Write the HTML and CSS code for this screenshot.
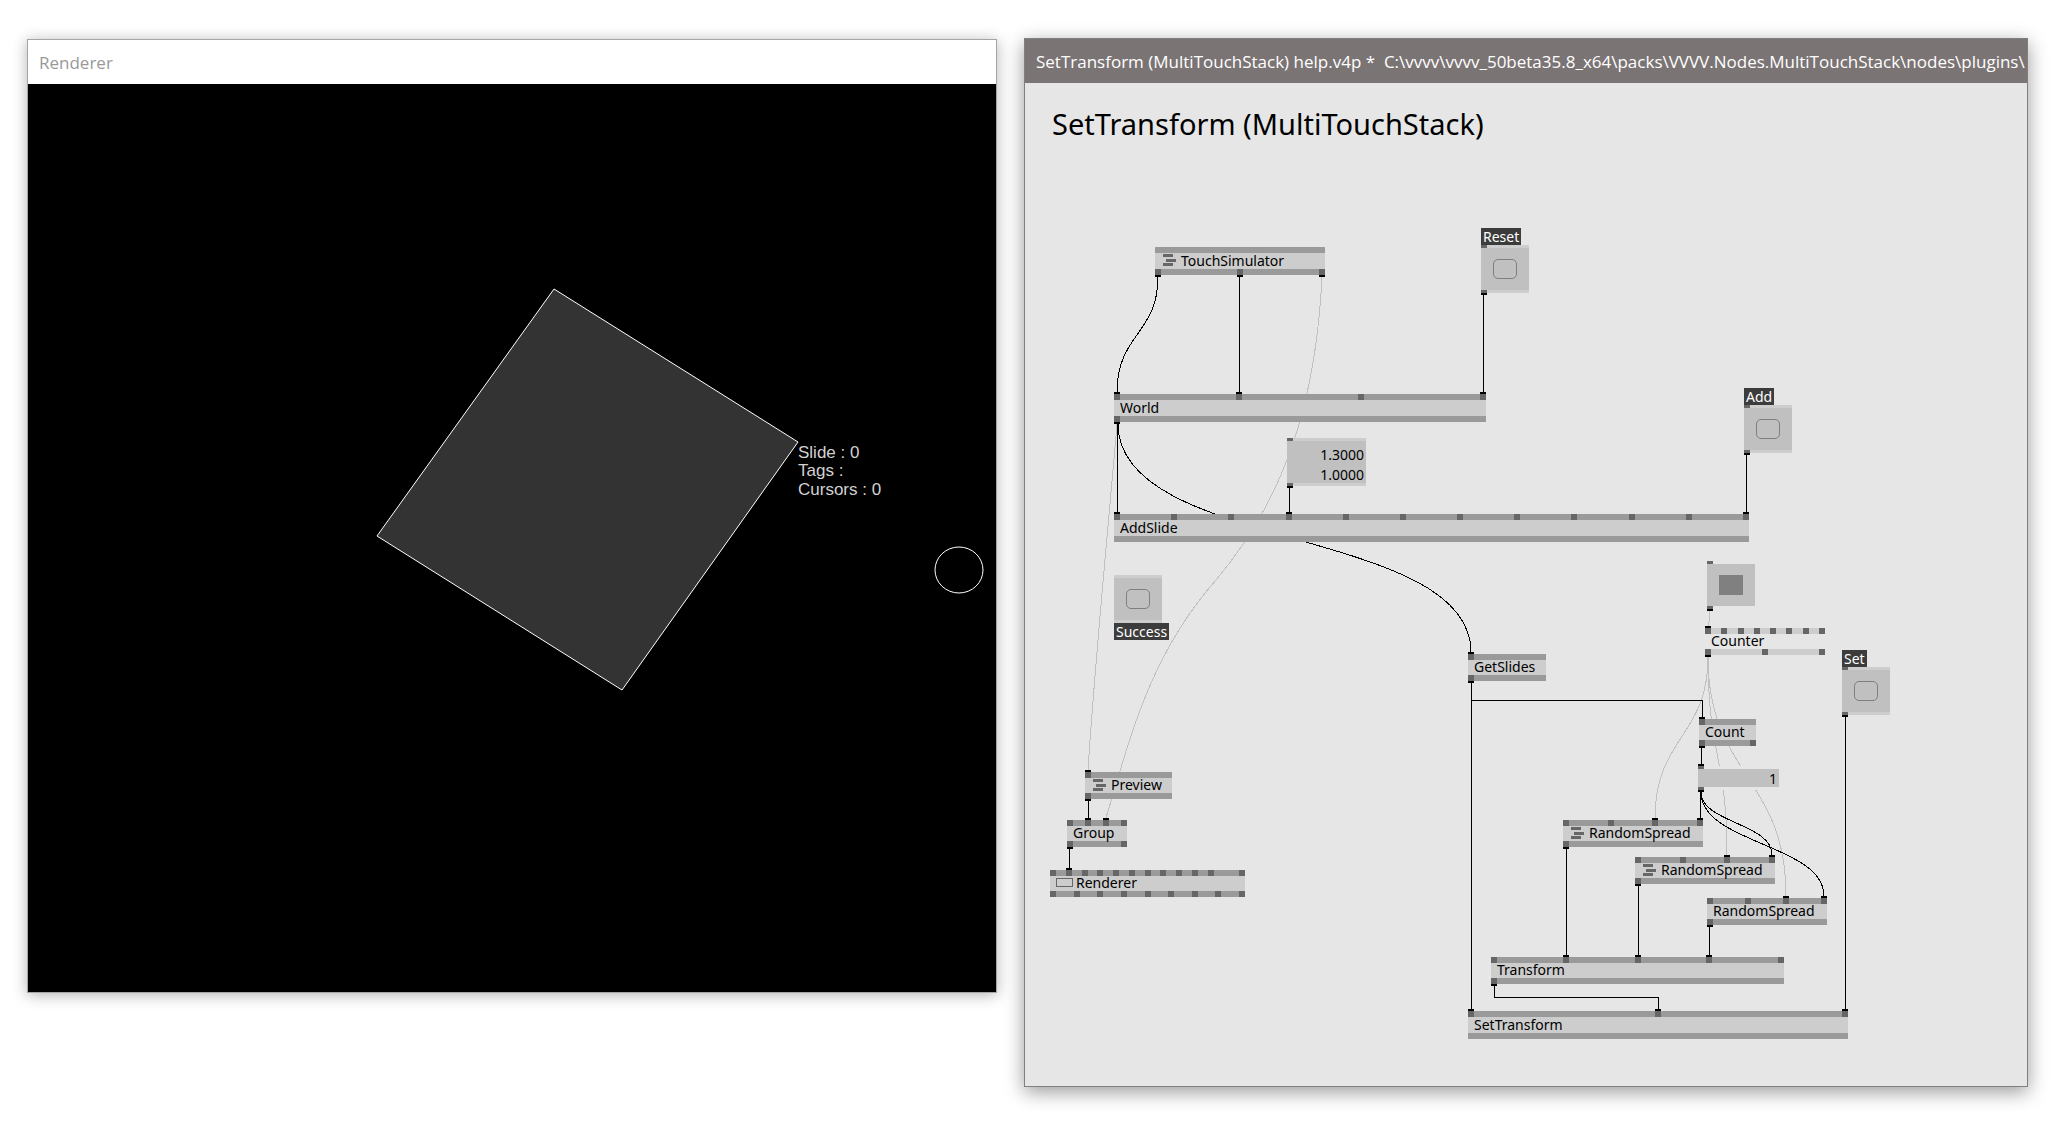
FILE: index.html
```html
<!DOCTYPE html>
<html lang="en">
<head>
<meta charset="utf-8">
<title>SetTransform (MultiTouchStack) help</title>
<link rel="stylesheet" href="styles.css">
</head>
<body>
<main class="desktop">
  <section class="window renderer-window">
    <header class="titlebar">Renderer</header>
    <svg class="scene" viewBox="28 84 968 908" role="img" aria-label="Renderer output">
      <polygon class="slide" points="554,289 798,442 622,690 377,536"/>
      <ellipse class="cursor" cx="959" cy="570" rx="24" ry="23"/>
      <text class="scene-text" x="798" y="458">Slide : 0</text>
      <text class="scene-text" x="798" y="476">Tags :</text>
      <text class="scene-text" x="798" y="495">Cursors : 0</text>
    </svg>
  </section>

  <section class="window patch-window">
    <header class="titlebar">SetTransform (MultiTouchStack) help.v4p *&nbsp; C:\vvvv\vvvv_50beta35.8_x64\packs\VVVV.Nodes.MultiTouchStack\nodes\plugins\</header>
    <div class="patch">
      <h1 class="heading">SetTransform (MultiTouchStack)</h1>

      <svg class="wires" width="1003" height="1003" viewBox="1025 83 1003 1003" aria-hidden="true">
        <g class="wire-soft">
          <path d="M1322 277C1316 400 1286 497 1216 580C1150 655 1131 735 1106 818"/>
          <path d="M1117 424C1109 520 1095 660 1088 770"/>
          <path d="M1709.5 611V618L1708.5 626"/>
          <path d="M1708 657C1708 737 1655 737 1655 818"/>
          <path d="M1708 657C1708 756 1727 756 1727 855"/>
          <path d="M1708 657C1708 776 1786 776 1786 896"/>
        </g>
        <g class="wire">
          <path d="M1158 277C1158 334 1117 334 1117 392"/>
          <path d="M1239.5 277V392"/>
          <path d="M1483.5 295V392"/>
          <path d="M1117.5 424V512"/>
          <path d="M1118 424C1118 552 1471 526 1471 652"/>
          <path d="M1289.5 488V512"/>
          <path d="M1746.5 455V512"/>
          <path d="M1088.5 801V818"/>
          <path d="M1069.5 849V868"/>
          <path d="M1471.5 683V1009"/>
          <path d="M1471.5 700.5H1702.5V717"/>
          <path d="M1701.5 748V764"/>
          <path d="M1700.5 792V818"/>
          <path d="M1701 792C1701 823 1772 823 1772 855"/>
          <path d="M1701 792C1701 844 1824 844 1824 896"/>
          <path d="M1566.5 849V955"/>
          <path d="M1638.5 886V955"/>
          <path d="M1709.5 927V955"/>
          <path d="M1845.5 717V1009"/>
          <path d="M1494.5 986V997.5H1658.5V1009"/>
        </g>
      </svg>

      <div class="node tall touch-simulator">
        <div class="pins"></div>
        <div class="name"><svg class="glyph" viewBox="0 0 13 12"><path d="M0 0h10v3H0zM3 5h10v3H3zM0 9h10v3H0z"/></svg>TouchSimulator</div>
        <div class="pins out"><i class="linked"></i><i class="linked"></i><i class="linked"></i></div>
      </div>

      <div class="node tall world">
        <div class="pins"><i class="linked"></i><i class="linked"></i><i></i><i class="linked"></i></div>
        <div class="name">World</div>
        <div class="pins out"><i class="linked"></i></div>
      </div>

      <div class="node tall add-slide">
        <div class="pins"><i class="linked"></i><i></i><i></i><i class="linked"></i><i></i><i></i><i></i><i></i><i></i><i></i><i></i><i class="linked"></i></div>
        <div class="name">AddSlide</div>
        <div class="pins out"></div>
      </div>

      <div class="node get-slides">
        <div class="pins"><i class="linked"></i></div>
        <div class="name">GetSlides</div>
        <div class="pins out"><i class="linked"></i></div>
      </div>

      <div class="node plain counter">
        <div class="pins"><i class="linked"></i><i></i><i></i><i></i><i></i><i></i><i></i><i></i></div>
        <div class="name">Counter</div>
        <div class="pins out"><i class="linked"></i><i></i><i></i></div>
      </div>

      <div class="node count">
        <div class="pins"><i class="linked"></i></div>
        <div class="name">Count</div>
        <div class="pins out"><i class="linked"></i><i></i></div>
      </div>

      <div class="node random-a">
        <div class="pins"><i></i><i></i><i class="linked"></i><i class="linked"></i></div>
        <div class="name"><svg class="glyph" viewBox="0 0 13 12"><path d="M0 0h10v3H0zM3 5h10v3H3zM0 9h10v3H0z"/></svg>RandomSpread</div>
        <div class="pins out"><i class="linked"></i></div>
      </div>

      <div class="node random-b">
        <div class="pins"><i></i><i></i><i class="linked"></i><i class="linked"></i></div>
        <div class="name"><svg class="glyph" viewBox="0 0 13 12"><path d="M0 0h10v3H0zM3 5h10v3H3zM0 9h10v3H0z"/></svg>RandomSpread</div>
        <div class="pins out"><i class="linked"></i></div>
      </div>

      <div class="node random-c">
        <div class="pins"><i></i><i></i><i class="linked"></i><i class="linked"></i></div>
        <div class="name">RandomSpread</div>
        <div class="pins out"><i class="linked"></i></div>
      </div>

      <div class="node transform">
        <div class="pins"><i></i><i class="linked"></i><i class="linked"></i><i class="linked"></i><i></i></div>
        <div class="name">Transform</div>
        <div class="pins out"><i class="linked"></i></div>
      </div>

      <div class="node tall set-transform">
        <div class="pins"><i class="linked"></i><i class="linked"></i><i class="linked"></i></div>
        <div class="name">SetTransform</div>
        <div class="pins out"></div>
      </div>

      <div class="node preview">
        <div class="pins"><i class="linked"></i></div>
        <div class="name"><svg class="glyph" viewBox="0 0 13 12"><path d="M0 0h10v3H0zM3 5h10v3H3zM0 9h10v3H0z"/></svg>Preview</div>
        <div class="pins out"><i class="linked"></i></div>
      </div>

      <div class="node group">
        <div class="pins"><i></i><i class="linked"></i><i class="linked"></i><i></i></div>
        <div class="name">Group</div>
        <div class="pins out"><i class="linked"></i><i></i></div>
      </div>

      <div class="node renderer">
        <div class="pins"><i></i><i class="linked"></i><i></i><i></i><i></i><i></i><i></i><i></i><i></i><i></i><i></i><i class="hidden"></i><i></i></div>
        <div class="name"><span class="screen"></span>Renderer</div>
        <div class="pins out"><i></i><i></i><i></i><i></i><i></i><i></i><i></i><i></i><i></i></div>
      </div>

      <div class="io reset">
        <label class="tag" for="reset">Reset</label>
        <div class="box">
          <div class="pins"><i></i></div>
          <button class="bang" id="reset" type="button"><span class="ring"></span></button>
          <div class="pins out"><i class="linked"></i></div>
        </div>
      </div>

      <div class="io add">
        <label class="tag" for="add">Add</label>
        <div class="box">
          <div class="pins"><i></i></div>
          <button class="bang" id="add" type="button"><span class="ring"></span></button>
          <div class="pins out"><i class="linked"></i></div>
        </div>
      </div>

      <div class="io set">
        <label class="tag" for="set">Set</label>
        <div class="box">
          <div class="pins"><i></i></div>
          <button class="bang" id="set" type="button"><span class="ring"></span></button>
          <div class="pins out"><i class="linked"></i></div>
        </div>
      </div>

      <div class="io success">
        <div class="box">
          <div class="pins"></div>
          <button class="bang" id="success" type="button"><span class="ring"></span></button>
          <div class="pins out"></div>
        </div>
        <label class="tag" for="success">Success</label>
      </div>

      <div class="io bare toggle-io">
        <div class="box">
          <div class="pins"><i></i></div>
          <label class="bang"><input class="toggle" type="checkbox" checked aria-label="Toggle"></label>
          <div class="pins out"><i class="linked"></i></div>
        </div>
      </div>

      <div class="io size-io">
        <div class="box">
          <div class="pins"><i></i></div>
          <div class="values">
            <input class="value" value="1.3000" aria-label="Size X">
            <input class="value" value="1.0000" aria-label="Size Y">
          </div>
          <div class="pins out"><i class="linked"></i></div>
        </div>
      </div>

      <div class="io bare count-io">
        <div class="box">
          <div class="pins"><i class="linked"></i></div>
          <input class="value" value="1" aria-label="Slide count">
          <div class="pins out"><i class="linked"></i></div>
        </div>
      </div>
    </div>
  </section>
</main>
</body>
</html>
```
FILE: styles.css
```css
* {
  box-sizing: border-box;
}

body {
  margin: 0;
  background: #fff;
  font-family: "Noto Sans", "Open Sans", sans-serif;
}

/* Desktop with two windows */
.desktop {
  display: grid;
  grid-template-columns: 970fr 1004fr;
  align-items: start;
  gap: 27px;
  padding: 38px 43px 48px 27px;
}

.window {
  min-width: 0;
  border: 1px solid #7f7f7f;
  box-shadow: 0 5px 18px rgba(0, 0, 0, 0.4);
}

.titlebar {
  height: 44px;
  padding: 0 11px;
  line-height: 45px;
  font-family: "Open Sans", "Noto Sans", sans-serif;
  font-size: 17px;
  white-space: nowrap;
  overflow: hidden;
}

.renderer-window {
  margin-top: 1px;
  border-color: #a5a5a5;
  box-shadow: 0 2px 14px rgba(0, 0, 0, 0.3);
}

.renderer-window .titlebar {
  background: #fff;
  color: #999;
}

.patch-window .titlebar {
  background: #7b7474;
  color: #fff;
  padding-right: 0;
}

/* Renderer output */
.scene {
  display: block;
  width: 100%;
  background: #000;
}

.slide {
  fill: #333;
  stroke: #fff;
}

.cursor {
  fill: none;
  stroke: #fff;
}

.scene-text {
  fill: #d2d2d2;
  font-family: "Liberation Sans", Arial, sans-serif;
  font-size: 17px;
}

/* Patch canvas */
.patch {
  position: relative;
  min-height: 1003px;
  padding: 20px 27px;
  background: #e6e6e6;
  overflow: hidden;
}

.heading {
  margin: 0;
  font-size: 29px;
  font-weight: 400;
  line-height: 42px;
}

.wires {
  position: absolute;
  left: 0;
  top: 0;
  fill: none;
  shape-rendering: crispEdges;
}

.wire {
  stroke: #000;
}

.wire-soft {
  stroke: #c0c0c0;
}

/* Nodes */
.node,
.io {
  position: absolute;
}

.pins {
  display: flex;
  justify-content: space-between;
  height: 6px;
  background: #9a9a9a;
}

.pins i {
  position: relative;
  width: 6px;
  background: #666;
}

.pins .hidden {
  visibility: hidden;
}

.pins .linked::after {
  content: "";
  position: absolute;
  left: 0;
  bottom: 100%;
  width: 6px;
  height: 2px;
  background: #000;
}

.pins.out .linked::after {
  top: 100%;
  bottom: auto;
}

.name {
  display: flex;
  align-items: center;
  height: 15px;
  padding: 0 0 2px 6px;
  background: #cdcdcd;
  font-size: 14px;
  line-height: 13px;
  white-space: nowrap;
}

.tall .name {
  height: 16px;
}

.plain .name {
  background: #e6e6e6;
}

.plain .pins {
  background: #cdcdcd;
}

.glyph {
  width: 13px;
  height: 12px;
  margin: 0 5px 0 2px;
  fill: #666;
}

.screen {
  width: 17px;
  height: 9px;
  margin-right: 3px;
  border: 1px solid #666;
}

.touch-simulator { left: 130px; top: 164px; width: 170px; }
.world { left: 89px; top: 311px; width: 372px; }
.add-slide { left: 89px; top: 431px; width: 635px; }
.get-slides { left: 443px; top: 571px; width: 78px; }
.counter { left: 680px; top: 545px; width: 120px; }
.count { left: 674px; top: 636px; width: 57px; }
.random-a { left: 538px; top: 737px; width: 140px; }
.random-b { left: 610px; top: 774px; width: 140px; }
.random-c { left: 682px; top: 815px; width: 120px; }
.transform { left: 466px; top: 874px; width: 293px; }
.set-transform { left: 443px; top: 928px; width: 380px; }
.preview { left: 60px; top: 689px; width: 87px; }
.group { left: 42px; top: 737px; width: 60px; }
.renderer { left: 25px; top: 787px; width: 195px; }

/* IO boxes */
.io {
  display: flex;
  flex-direction: column;
  align-items: flex-start;
}

.box {
  width: 48px;
  background: #c0c0c0;
}

.box .pins {
  height: 3px;
  background: #cdcdcd;
}

.bare .pins {
  background: #e6e6e6;
}

.bang {
  display: flex;
  align-items: center;
  justify-content: center;
  width: 100%;
  height: 42px;
  padding: 0;
  border: 0;
  background: #c0c0c0;
}

.ring {
  width: 24px;
  height: 20px;
  border: 1px solid #7f7f7f;
  border-radius: 5px;
}

.toggle {
  appearance: none;
  width: 24px;
  height: 20px;
  margin: 0;
}

.toggle:checked {
  background: #808080;
}

.tag {
  height: 17px;
  padding: 0 2px;
  background: #3c3c3c;
  color: #fff;
  font-size: 14px;
  line-height: 17px;
}

.values {
  height: 42px;
  padding-top: 3px;
}

.value {
  display: block;
  width: 100%;
  height: 20px;
  padding: 0 2px;
  border: 0;
  background: transparent;
  color: #000;
  font-family: inherit;
  font-size: 14px;
  text-align: right;
}

.count-io .value {
  height: 18px;
}

.reset { left: 456px; top: 145px; }
.add { left: 719px; top: 305px; }
.set { left: 817px; top: 567px; }
.success { left: 89px; top: 492px; }
.toggle-io { left: 682px; top: 478px; }
.size-io { left: 262px; top: 355px; }
.size-io .box { width: 79px; }
.count-io { left: 673px; top: 683px; }
.count-io .box { width: 81px; }
```
